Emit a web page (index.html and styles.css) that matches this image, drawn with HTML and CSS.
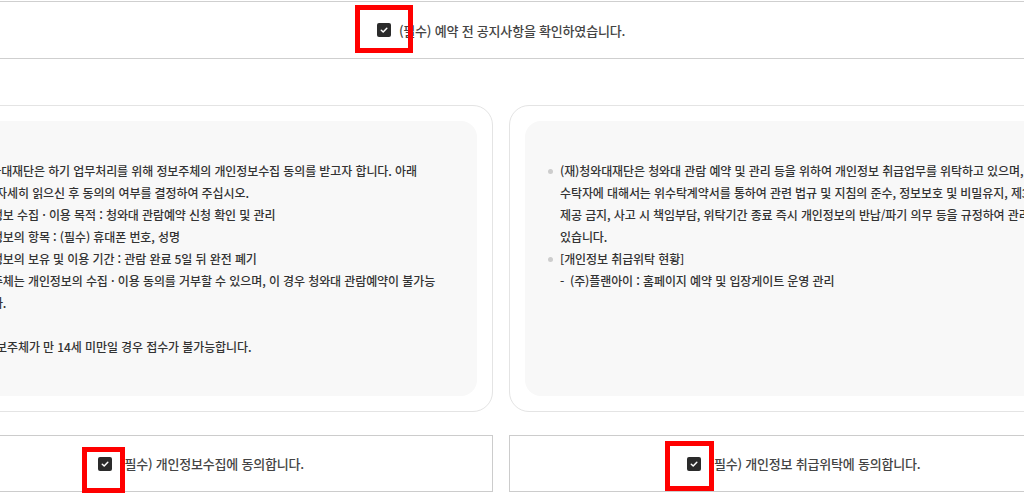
FILE: index.html
```html
<!DOCTYPE html>
<html lang="ko">
<head>
<meta charset="utf-8">
<title>약관 동의</title>
<link rel="stylesheet" href="styles.css">
</head>
<body>
<div class="page">
  <div class="notice">
    <label class="check">
      <span class="box"><svg viewBox="0 0 14 14" width="14" height="14"><path d="M4.3 7.2 L6.2 9 L9.8 5.3" fill="none" stroke="#fff" stroke-width="1.5" stroke-linecap="round" stroke-linejoin="round"/></svg></span>
      <span class="label">(필수) 예약 전 공지사항을 확인하였습니다.</span>
    </label>
  </div>

  <div class="grid">
    <section class="card">
      <div class="card-body">
        <ul class="bullets">
          <li>(재)청와대재단은 하기 업무처리를 위해 정보주체의 개인정보수집 동의를 받고자 합니다. 아래<br>내용을 자세히 읽으신 후 동의의 여부를 결정하여 주십시오.
            <ul class="dashes">
              <li>개인정보 수집 · 이용 목적 : 청와대 관람예약 신청 확인 및 관리</li>
              <li>개인정보의 항목 : (필수) 휴대폰 번호, 성명</li>
              <li>개인정보의 보유 및 이용 기간 : 관람 완료 5일 뒤 완전 폐기</li>
              <li>정보주체는 개인정보의 수집 · 이용 동의를 거부할 수 있으며, 이 경우 청와대 관람예약이 불가능<br>합니다.</li>
            </ul>
          </li>
        </ul>
        <p class="note">※ 정보주체가 만 14세 미만일 경우 접수가 불가능합니다.</p>
      </div>
    </section>

    <section class="card">
      <div class="card-body">
        <ul class="bullets">
          <li>(재)청와대재단은 청와대 관람 예약 및 관리 등을 위하여 개인정보 취급업무를 위탁하고 있으며,<br>수탁자에 대해서는 위수탁계약서를 통하여 관련 법규 및 지침의 준수, 정보보호 및 비밀유지, 제3자<br>제공 금지, 사고 시 책임부담, 위탁기간 종료 즉시 개인정보의 반납/파기 의무 등을 규정하여 관리하고<br>있습니다.</li>
          <li>[개인정보 취급위탁 현황]
            <ul class="dashes">
              <li>(주)플랜아이 : 홈페이지 예약 및 입장게이트 운영 관리</li>
            </ul>
          </li>
        </ul>
      </div>
    </section>

    <div class="agree">
      <label class="check">
        <span class="box"><svg viewBox="0 0 14 14" width="14" height="14"><path d="M4.3 7.2 L6.2 9 L9.8 5.3" fill="none" stroke="#fff" stroke-width="1.5" stroke-linecap="round" stroke-linejoin="round"/></svg></span>
        <span class="label">(필수) 개인정보수집에 동의합니다.</span>
      </label>
    </div>

    <div class="agree agree-right">
      <label class="check">
        <span class="box"><svg viewBox="0 0 14 14" width="14" height="14"><path d="M4.3 7.2 L6.2 9 L9.8 5.3" fill="none" stroke="#fff" stroke-width="1.5" stroke-linecap="round" stroke-linejoin="round"/></svg></span>
        <span class="label">(필수) 개인정보 취급위탁에 동의합니다.</span>
      </label>
    </div>
  </div>
</div>

<div class="mark mark-top"></div>
<div class="mark mark-left"></div>
<div class="mark mark-right"></div>
</body>
</html>
```

FILE: styles.css
```css
html, body {
  margin: 0;
  padding: 0;
  background: #fff;
  overflow: hidden;
}

body {
  font-family: "Noto Sans CJK KR", "Noto Sans", sans-serif;
  font-weight: 500;
  color: #333;
  position: relative;
  height: 494px;
}

.page {
  width: 1184px;
  margin-left: -91px;
}

.notice {
  margin: 1px -200px 0;
  height: 58px;
  box-sizing: border-box;
  border-top: 1px solid #cfcfcf;
  border-bottom: 1px solid #cfcfcf;
  display: flex;
  align-items: center;
  justify-content: center;
}

.check {
  display: flex;
  align-items: center;
  gap: 8px;
  font-size: 13px;
  letter-spacing: -0.2px;
  color: #444;
}

.box {
  width: 14px;
  height: 14px;
  border-radius: 2px;
  background: #2b2b2b;
  display: block;
  flex: none;
}

.box svg {
  display: block;
}

.grid {
  margin-top: 46px;
  display: grid;
  grid-template-columns: 584px 584px;
  column-gap: 16px;
  row-gap: 23px;
}

.card {
  border: 1px solid #e4e4e4;
  border-radius: 20px;
  padding: 15px;
}

.card-body {
  background: #f8f8f8;
  border-radius: 16px;
  padding: 39px 20px 38px 35px;
  height: 100%;
  box-sizing: border-box;
  font-size: 12px;
  line-height: 22px;
  letter-spacing: -0.1px;
  white-space: nowrap;
}

.bullets,
.dashes {
  list-style: none;
  margin: 0;
  padding: 0;
}

.bullets > li {
  position: relative;
}

.bullets > li::before {
  content: "";
  position: absolute;
  left: -12px;
  top: 9px;
  width: 5px;
  height: 5px;
  border-radius: 50%;
  background: #cdcdcd;
}

.dashes > li {
  position: relative;
  padding-left: 10px;
}

.dashes > li::before {
  content: "-";
  position: absolute;
  left: 0;
  top: 0;
}

.note {
  margin: 22px 0 0 10px;
}

.agree {
  height: 57px;
  box-sizing: border-box;
  border: 1px solid #cccccc;
  display: flex;
  align-items: center;
  justify-content: center;
}

.agree-right {
  padding-left: 6px;
}

.mark {
  position: absolute;
  box-sizing: border-box;
  border: 5px solid #ff0000;
}

.mark-top {
  left: 355px;
  top: 5px;
  width: 58px;
  height: 48px;
}

.mark-left {
  left: 82px;
  top: 447px;
  width: 43px;
  height: 46px;
}

.mark-right {
  left: 665px;
  top: 441px;
  width: 49px;
  height: 50px;
}
```
